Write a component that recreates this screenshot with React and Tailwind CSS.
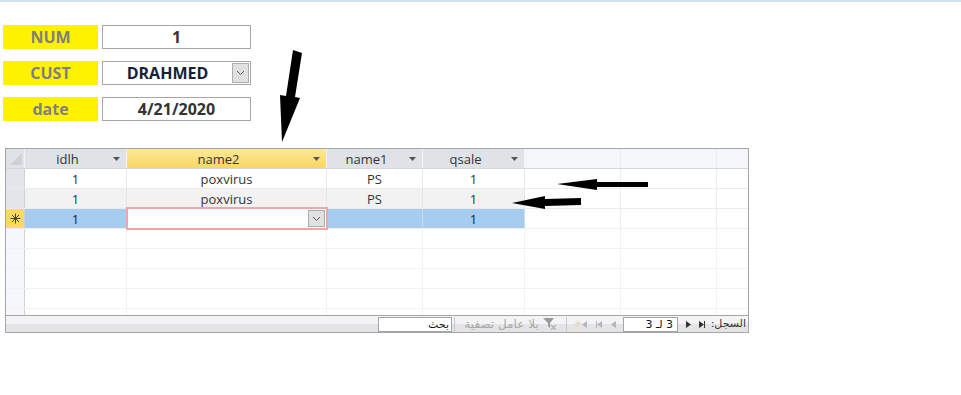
const rows = [
  { id: 1, idlh: "1", name2: "poxvirus", name1: "PS", qsale: "1", bg: "bg-white" },
  { id: 2, idlh: "1", name2: "poxvirus", name1: "PS", qsale: "1", bg: "bg-[#f2f2f2]" },
];

const Caret = () => (
  <svg width="7" height="4" viewBox="0 0 7 4" className="absolute right-[6px] top-[8px]">
    <path d="M0 0 H7 L3.5 4 Z" fill="#555" />
  </svg>
);

const Chevron = () => (
  <svg width="9" height="6" viewBox="0 0 9 6">
    <path d="M1 1 L4.5 4.5 L8 1" fill="none" stroke="#555" strokeWidth="1" />
  </svg>
);

function Field({ label, value, combo, dark }) {
  return (
    <div className="flex items-center gap-[4px]">
      <div className="w-[95px] h-[24px] bg-[#fff200] flex items-center justify-center text-[16px] font-bold text-[#7f7f7f]">
        {label}
      </div>
      <div className="relative w-[149px] h-[24px] border border-[#a6a6a6] flex items-center">
        <span className={`flex-1 text-center text-[16px] font-bold ${dark ? "text-[#14233a]" : "text-[#333]"} ${combo ? "pr-[18px]" : ""}`}>
          {value}
        </span>
        {combo && (
          <div className="absolute right-[1px] top-[1px] w-[17px] h-[20px] bg-[#e1e1e1] border border-[#adadad] flex items-center justify-center">
            <Chevron />
          </div>
        )}
      </div>
    </div>
  );
}

const Selector = ({ bg, children }) => (
  <div className={`w-[19px] shrink-0 h-full border-r border-[#cfd2d7] ${bg} flex items-center justify-center`}>
    {children}
  </div>
);

function ExtraCells({ line = "border-[#eeeeee]" }) {
  return (
    <>
      <div className={`w-[96px] shrink-0 h-full border-r ${line}`} />
      <div className={`w-[96px] shrink-0 h-full border-r ${line}`} />
      <div className="flex-1 h-full" />
    </>
  );
}

const Tri = ({ dir = "right", color = "#333" }) => (
  <svg width="5" height="7" viewBox="0 0 5 7">
    {dir === "right" ? <path d="M0 0 L5 3.5 L0 7 Z" fill={color} /> : <path d="M5 0 L0 3.5 L5 7 Z" fill={color} />}
  </svg>
);

export default function App() {
  return (
    <div className="relative w-[961px] h-[395px] bg-white overflow-hidden font-['Open_Sans',sans-serif]">
      <div className="h-[2px] bg-[#d3e2f3]" />

      <div className="pl-[3px] pt-[23px] flex flex-col gap-[12px]">
        <Field label="NUM" value="1" />
        <Field label="CUST" value="DRAHMED" combo dark />
        <Field label="date" value="4/21/2020" />
      </div>

      {/* datasheet */}
      <div className="ml-[5px] mt-[27px] w-[744px] border border-[#a5a5a5] text-[13px] text-[#333]">
        {/* header */}
        <div className="flex h-[20px] border-b border-[#d4d7dc]">
          <div className="w-[19px] shrink-0 h-full bg-[#dfe2e7] border-r border-[#f2f2f2] relative">
            <svg width="12" height="12" viewBox="0 0 12 12" className="absolute left-[4px] top-[4px]">
              <path d="M12 0 L12 12 L0 12 Z" fill="#cdd1d7" />
            </svg>
          </div>
          <div className="relative w-[102px] shrink-0 h-full bg-[#dfe2e7] border-r border-[#f4f4f4] pr-[16px] text-center leading-[21px]">
            idlh<Caret />
          </div>
          <div className="relative w-[200px] shrink-0 h-full bg-gradient-to-b from-[#fde898] to-[#fbd65f] border-r border-[#f4f4f4] pr-[16px] text-center leading-[21px]">
            name2<Caret />
          </div>
          <div className="relative w-[96px] shrink-0 h-full bg-[#dfe2e7] border-r border-[#f4f4f4] pr-[16px] text-center leading-[21px]">
            name1<Caret />
          </div>
          <div className="relative w-[102px] shrink-0 h-full bg-[#dfe2e7] border-r border-[#f4f4f4] pr-[16px] text-center leading-[21px]">
            qsale<Caret />
          </div>
          <div className="flex flex-1 h-full bg-[#f4f6fb]">
            <ExtraCells line="border-[#e9ecf2]" />
          </div>
        </div>

        {/* body */}
        <div className="h-[146px] overflow-hidden">
          {rows.map((r) => (
            <div key={r.id} className="flex h-[20px] border-b border-[#ebebeb]">
              <Selector bg="bg-[#e2e5e9]" />
              <div className={`w-[102px] shrink-0 h-full border-r border-[#e8e8e0] ${r.bg} text-center leading-[21px]`}>{r.idlh}</div>
              <div className={`w-[200px] shrink-0 h-full border-r border-[#e8e8e0] ${r.bg} text-center leading-[21px]`}>{r.name2}</div>
              <div className={`w-[96px] shrink-0 h-full border-r border-[#e8e8e0] ${r.bg} text-center leading-[21px]`}>{r.name1}</div>
              <div className={`w-[102px] shrink-0 h-full border-r border-[#e8e8e0] ${r.bg} text-center leading-[21px]`}>{r.qsale}</div>
              <ExtraCells />
            </div>
          ))}

          {/* new record row */}
          <div className="flex h-[20px] border-b border-[#eeeeee]">
            <Selector bg="bg-[#fdd862]">
              <svg width="11" height="11" viewBox="0 0 11 11">
                <g stroke="#444" strokeWidth="1">
                  <path d="M5.5 0.5 V10.5" />
                  <path d="M0.5 5.5 H10.5" />
                  <path d="M2 2 L9 9" />
                  <path d="M9 2 L2 9" />
                </g>
              </svg>
            </Selector>
            <div className="w-[102px] shrink-0 h-full border-r border-[#c6dcef] bg-[#a6cdef] text-center leading-[21px] text-[#222]">1</div>
            <div className="relative w-[200px] shrink-0 h-full bg-white">
              <div className="absolute -left-[1px] -top-[2px] w-[202px] h-[23px] border-2 border-[#f3a4a4] bg-white">
                <div className="absolute right-[1px] top-[1px] w-[17px] h-[17px] bg-[#e1e1e1] border border-[#adadad] flex items-center justify-center">
                  <Chevron />
                </div>
              </div>
            </div>
            <div className="w-[96px] shrink-0 h-full border-r border-[#c6dcef] bg-[#a6cdef]" />
            <div className="w-[102px] shrink-0 h-full border-r border-[#c6dcef] bg-[#a6cdef] text-center leading-[21px] text-[#222]">1</div>
            <ExtraCells />
          </div>

          {[0, 1, 2, 3, 4].map((i) => (
            <div key={i} className="flex h-[20px] border-b border-[#f2f2f2]">
              <Selector bg="bg-[#f6f7fd]" />
              <div className="w-[102px] shrink-0 h-full border-r border-[#f2f2ee]" />
              <div className="w-[200px] shrink-0 h-full border-r border-[#f2f2ee]" />
              <div className="w-[96px] shrink-0 h-full border-r border-[#f2f2ee]" />
              <div className="w-[102px] shrink-0 h-full border-r border-[#f2f2ee]" />
              <ExtraCells line="border-[#f2f2f2]" />
            </div>
          ))}
        </div>

        {/* navigation bar */}
        <div
          dir="rtl"
          className="flex items-center h-[17px] border-t border-[#a5a5a5] bg-gradient-to-b from-[#f4f4f6] from-50% to-[#e4e4e7] to-50% text-[11px] font-['DejaVu_Sans',sans-serif]"
        >
          <div className="w-[36px] shrink-0 text-right pr-[2px] text-[#333] whitespace-nowrap">السجل:</div>
          <div className="w-[34px] shrink-0 flex items-center justify-center gap-[8px]">
            <span className="flex items-center">
              <span className="w-[1px] h-[7px] bg-[#333]" />
              <Tri dir="right" />
            </span>
            <Tri dir="right" />
          </div>
          <div className="w-[55px] h-[15px] shrink-0 bg-white border border-[#a5a5a5] text-right pr-[4px] leading-[13px] text-[#111]">
            3 لـ 3
          </div>
          <div className="w-[56px] shrink-0 flex items-center justify-center gap-[9px]">
            <Tri dir="left" color="#b5b5b5" />
            <span className="flex items-center">
              <Tri dir="left" color="#b5b5b5" />
              <span className="w-[1px] h-[7px] bg-[#b5b5b5]" />
            </span>
            <span className="flex items-center">
              <Tri dir="left" color="#b5b5b5" />
              <span className="text-[#d8d0a8] text-[9px] leading-none">✳</span>
            </span>
          </div>
          <div className="w-[1px] h-[15px] bg-[#c8c8c8] shrink-0" />
          <div className="w-[112px] shrink-0 flex items-center justify-center gap-[4px] text-[#a7a7a7] border-l border-[#c8c8c8] h-[15px] whitespace-nowrap">
            <svg width="14" height="12" viewBox="0 0 14 12">
              <path d="M0 0 H11 L7 5 V10 L5 8 V5 Z" fill="#9a9a9a" />
              <path d="M8 7 L13 12 M13 7 L8 12" stroke="#b0b0b0" strokeWidth="1.2" />
            </svg>
            <span className="text-[12px]">بلا عامل تصفية</span>
          </div>
          <div className="w-[2px] shrink-0" />
          <div className="w-[74px] h-[15px] shrink-0 bg-white border border-[#a5a5a5] text-right pr-[2px] leading-[13px] text-[#111]">
            بحث
          </div>
        </div>
      </div>

      {/* annotation arrows */}
      <svg className="absolute left-0 top-0 pointer-events-none" width="961" height="395">
        <polygon points="293,50 302,53 295,97 300,98 282,142 280,95 286,96" fill="#000" />
        <polygon points="648,182 648,187 597,187 597,190 557,184 597,179 597,182" fill="#000" />
        <polygon points="581,198 581,205 545,206 545,209 512,203 545,196 545,199" fill="#000" />
      </svg>
    </div>
  );
}
